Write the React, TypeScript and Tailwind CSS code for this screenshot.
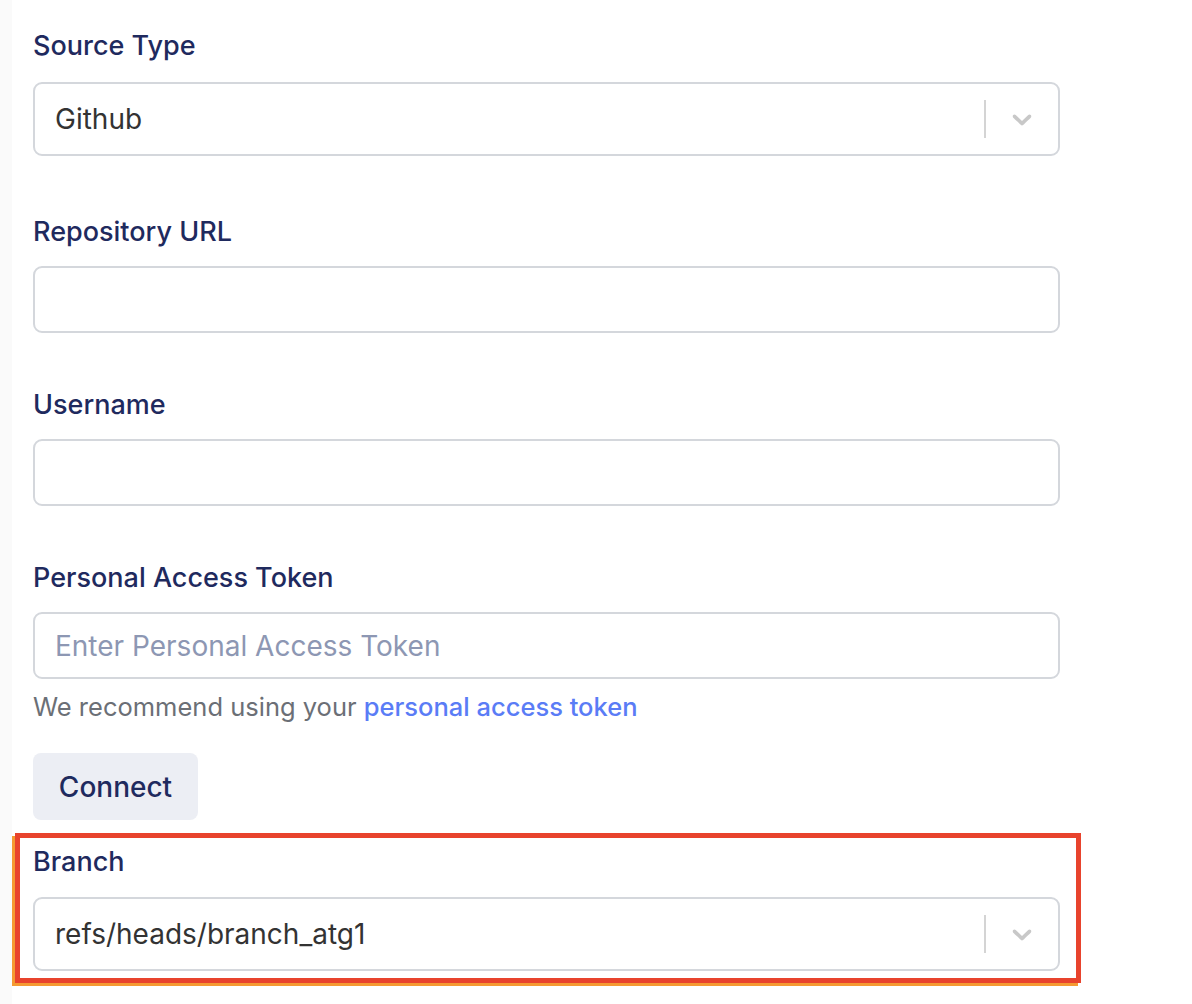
const Chevron = () => (
  <svg width="32" height="32" viewBox="0 0 20 20" className="text-[#c8c8c8]" fill="currentColor">
    <path d="M4.516 7.548c0.436-0.446 1.043-0.481 1.576 0l3.908 3.747 3.908-3.747c0.533-0.481 1.141-0.446 1.574 0 0.436 0.445 0.408 1.197 0 1.615-0.406 0.418-4.695 4.502-4.695 4.502-0.217 0.223-0.502 0.335-0.787 0.335s-0.57-0.112-0.789-0.335c0 0-4.287-4.084-4.695-4.502s-0.436-1.17 0-1.615z" />
  </svg>
)

const Label = ({ children }: { children: React.ReactNode }) => (
  <label className="block text-[27px] leading-[32px] font-medium text-[#1f2a5e]">{children}</label>
)

const SelectBox = ({ value }: { value: string }) => (
  <div className="flex items-center h-[74px] w-[1027px] border-2 border-[#d4d7dc] rounded-[9px] bg-white">
    <span className="flex-1 pl-[20px] text-[28px] text-[#333333]">{value}</span>
    <span className="w-[2px] h-[38px] bg-[#d4d4d4]"></span>
    <span className="w-[72px] flex justify-center items-center"><Chevron /></span>
  </div>
)

const TextInput = ({ placeholder }: { placeholder?: string }) => (
  <input
    placeholder={placeholder}
    className="block h-[67px] w-[1027px] border-2 border-[#d4d7dc] rounded-[9px] bg-white px-[20px] text-[28px] text-[#333333] placeholder:text-[#8d97b3] outline-none"
  />
)

export default function App() {
  return (
    <div className="min-h-[1004px] w-[1192px] bg-white flex" style={{ fontFamily: 'Inter, "Noto Sans", sans-serif' }}>
      <div className="w-[12px] bg-[#fafafa]"></div>
      <div className="flex-1">
        <div className="pl-[21px] pt-[30px]">
          <Label>Source Type</Label>
          <div className="mt-[20px]"><SelectBox value="Github" /></div>

          <div className="mt-[60px]"><Label>Repository URL</Label></div>
          <div className="mt-[18px]"><TextInput /></div>

          <div className="mt-[56px]"><Label>Username</Label></div>
          <div className="mt-[18px]"><TextInput /></div>

          <div className="mt-[56px]"><Label>Personal Access Token</Label></div>
          <div className="mt-[18px]"><TextInput placeholder="Enter Personal Access Token" /></div>
          <p className="mt-[13px] text-[25.5px] leading-[30px] text-[#6b6f76]">
            We recommend using your <a className="text-[#5a7cf6] font-medium">personal access token</a>
          </p>

          <button className="mt-[31px] h-[67px] w-[165px] rounded-[8px] bg-[#eceef4] text-[28px] font-medium text-[#1f2a5e]">
            Connect
          </button>
        </div>

        <div className="mt-[13px] ml-[3px] w-[1066px] border-[5px] border-[#e8432d] shadow-[-3px_3px_0_#f59a32] pl-[13px] pt-[8px] pb-[7px]">
          <Label>Branch</Label>
          <div className="mt-[19px]"><SelectBox value="refs/heads/branch_atg1" /></div>
        </div>
      </div>
    </div>
  )
}
